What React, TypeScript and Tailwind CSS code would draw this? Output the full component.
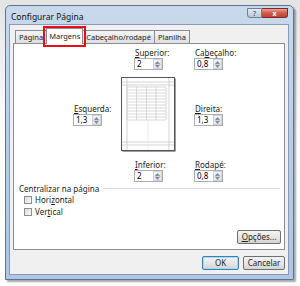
import React from "react";

function U({ text, i }: { text: string; i: number }) {
  if (i < 0) return <>{text}</>;
  return (
    <>
      {text.slice(0, i)}
      <span className="underline underline-offset-[1px]">{text[i]}</span>
      {text.slice(i + 1)}
    </>
  );
}

function Arrow({ up }: { up: boolean }) {
  return (
    <svg width="5" height="3" viewBox="0 0 5 3" className="block">
      {up ? (
        <polygon points="0,3 2.5,0 5,3" fill="#7d8ea8" />
      ) : (
        <polygon points="0,0 2.5,3 5,0" fill="#7d8ea8" />
      )}
    </svg>
  );
}

function Spin({ value }: { value: string }) {
  return (
    <div className="w-[29px] h-[12px] border border-[#abadb3] bg-white flex">
      <div className="flex-1 pl-[2px] text-[8px] leading-[10px] text-black">{value}</div>
      <div className="w-[9px] flex flex-col">
        <div className="h-[5px] flex items-center justify-center bg-gradient-to-b from-[#f6f6f6] to-[#e4e4e4] border border-[#d2d2d2] border-b-0">
          <Arrow up />
        </div>
        <div className="h-[5px] flex items-center justify-center bg-gradient-to-b from-[#f6f6f6] to-[#e4e4e4] border border-[#d2d2d2]">
          <Arrow up={false} />
        </div>
      </div>
    </div>
  );
}

function Field({ label, u, value, className = "" }: { label: string; u: number; value: string; className?: string }) {
  return (
    <div className={"flex flex-col " + className}>
      <span className="h-[10px] leading-[10px] text-[8px] text-[#1e1e1e] pl-[1px]">
        <U text={label} i={u} />
      </span>
      <Spin value={value} />
    </div>
  );
}

function PagePreview() {
  const rows = [];
  for (let r = 0; r <= 11; r++) {
    const y = 10 + r * 3;
    rows.push(<line key={"r" + r} x1="6" y1={y} x2="45" y2={y} stroke="#cfcfcf" strokeWidth="0.8" />);
  }
  const cols = [6, 15.5, 25.5, 35, 45];
  return (
    <svg width="56" height="76" viewBox="0 0 56 76" className="block">
      <rect x="1.5" y="1.5" width="53" height="73" fill="#3c3c3c" />
      <rect x="0.5" y="0.5" width="53" height="73" fill="#ffffff" stroke="#555555" strokeWidth="1" />
      <line x1="6" y1="1" x2="6" y2="73" stroke="#c8c8c8" strokeWidth="0.8" />
      <line x1="48" y1="1" x2="48" y2="73" stroke="#c8c8c8" strokeWidth="0.8" />
      <line x1="1" y1="5" x2="53" y2="5" stroke="#c8c8c8" strokeWidth="0.8" />
      <line x1="1" y1="8" x2="53" y2="8" stroke="#c8c8c8" strokeWidth="0.8" />
      <line x1="1" y1="65" x2="53" y2="65" stroke="#c8c8c8" strokeWidth="0.8" />
      <line x1="1" y1="68" x2="53" y2="68" stroke="#c8c8c8" strokeWidth="0.8" />
      {rows}
      {cols.map((x, i) => (
        <line key={"c" + i} x1={x} y1="10" x2={x} y2="43" stroke="#cfcfcf" strokeWidth="0.8" />
      ))}
      <line x1="27" y1="43" x2="27" y2="73" stroke="#e6e6e6" strokeWidth="0.8" />
    </svg>
  );
}

function Check({ label, u }: { label: string; u: number }) {
  return (
    <div className="flex items-center gap-[3px] h-[12px]">
      <div className="w-[8px] h-[8px] border border-[#8f8f8f] bg-gradient-to-br from-[#dcdcdc] to-[#f8f8f8]" />
      <span className="text-[8px] leading-[10px] text-[#1e1e1e]">
        <U text={label} i={u} />
      </span>
    </div>
  );
}

function Btn({ children, w, def = false }: { children: React.ReactNode; w: string; def?: boolean }) {
  return (
    <div
      className={
        "h-[14px] rounded-[2px] border flex items-center justify-center text-[8px] leading-[10px] text-[#1e1e1e] bg-gradient-to-b from-[#f3f3f3] via-[#e6e6e6] to-[#d4d4d4] " +
        (def ? "border-[#3c7fb1] shadow-[inset_0_0_0_1px_#a7d8f7] " : "border-[#707070] ") +
        w
      }
    >
      {children}
    </div>
  );
}

export default function App() {
  return (
    <div className="w-[300px] h-[286px] overflow-hidden bg-gradient-to-b from-[#e4e4e4] via-[#ffffff] to-[#ffffff] font-['Noto_Sans',sans-serif] pt-[5px] pl-[5px]">
      <div className="w-[289px] h-[275px] rounded-t-[5px] border border-[#5d7391] bg-gradient-to-b from-[#c9d9ec] via-[#b9cde6] to-[#aec6e3] flex flex-col pl-[3px] pr-[4px] pb-[4px] shadow-[2px_2px_2px_rgba(0,0,0,0.35)]">
        <div className="h-[18px] flex items-start justify-between shrink-0">
          <span className="text-[8.5px] leading-[10px] text-[#111] pl-[2px] pt-[6px]">Configurar Página</span>
          <div className="flex mt-[2px] mr-[1px]">
            <div className="w-[15px] h-[10px] rounded-bl-[3px] border border-[#6e7e94] bg-gradient-to-b from-[#e3ebf5] to-[#b7c6d9] flex items-center justify-center text-[7px] leading-[7px] text-[#3a4657]">
              ?
            </div>
            <div className="w-[26px] h-[10px] rounded-br-[3px] border border-l-0 border-[#7a2b2b] bg-gradient-to-b from-[#e8a095] via-[#cf5a4b] to-[#c6402f] flex items-center justify-center text-[7px] leading-[7px] font-bold text-white">
              x
            </div>
          </div>
        </div>
        <div className="flex-1 bg-[#f0f0f0] border border-[#8a9bb1] flex flex-col">
          <div className="flex items-end pl-[5px] pt-[2px] h-[18px] shrink-0">
            <div className="h-[13px] px-[3px] border border-b-0 border-[#898c95] bg-gradient-to-b from-[#f4f4f4] to-[#dedede] text-[7.5px] leading-[12px] text-[#1e1e1e]">
              Página
            </div>
            <div className="relative -mx-[1px] z-10 -mb-[1px]">
              <div className="h-[16px] px-[2px] border border-b-0 border-[#898c95] bg-white text-[7.5px] leading-[14px] text-[#1e1e1e]">
                Margens
              </div>
              <div className="absolute -left-[3px] -right-[3px] -top-[2px] -bottom-[3px] border-2 border-[#e3101a]" />
            </div>
            <div className="h-[13px] px-[3px] border border-b-0 border-[#898c95] bg-gradient-to-b from-[#f4f4f4] to-[#dedede] text-[7.5px] leading-[12px] text-[#1e1e1e]">
              Cabeçalho/rodapé
            </div>
            <div className="h-[13px] px-[3px] border border-b-0 border-l-0 border-[#898c95] bg-gradient-to-b from-[#f4f4f4] to-[#dedede] text-[7.5px] leading-[12px] text-[#1e1e1e]">
              Planilha
            </div>
          </div>
          <div className="mx-[3px] h-[207px] border border-[#898c95] bg-white flex flex-col shrink-0">
            <div className="grid grid-cols-[48px_73px_1fr] pl-[59px] pt-[4px]">
              <div />
              <Field label="Superior:" u={0} value="2" className="ml-[13px]" />
              <Field label="Cabeçalho:" u={2} value="0,8" />
              <div className="flex items-center h-[90px] col-start-1">
                <Field label="Esquerda:" u={0} value="1,3" />
              </div>
              <div className="flex items-center h-[90px]">
                <PagePreview />
              </div>
              <div className="flex items-center h-[90px]">
                <Field label="Direita:" u={0} value="1,3" />
              </div>
              <div />
              <Field label="Inferior:" u={0} value="2" className="ml-[13px]" />
              <Field label="Rodapé:" u={0} value="0,8" />
            </div>
            <div className="flex items-center mt-[1px] pl-[5px] pr-[4px] h-[11px]">
              <span className="text-[8px] leading-[10px] text-[#1e1e1e]">Centralizar na página</span>
              <div className="flex-1 h-px bg-[#dcdcdc] ml-[4px]" />
            </div>
            <div className="flex flex-col pl-[10px]">
              <Check label="Horizontal" u={4} />
              <Check label="Vertical" u={3} />
            </div>
            <div className="flex-1" />
            <div className="flex justify-end pr-[3px] pb-[5px]">
              <Btn w="w-[44px]">
                <U text="Opções..." i={0} />
              </Btn>
            </div>
          </div>
          <div className="flex justify-end gap-[4px] pr-[3px] pt-[6px]">
            <Btn w="w-[37px]" def>
              OK
            </Btn>
            <Btn w="w-[42px]">Cancelar</Btn>
          </div>
        </div>
      </div>
    </div>
  );
}
